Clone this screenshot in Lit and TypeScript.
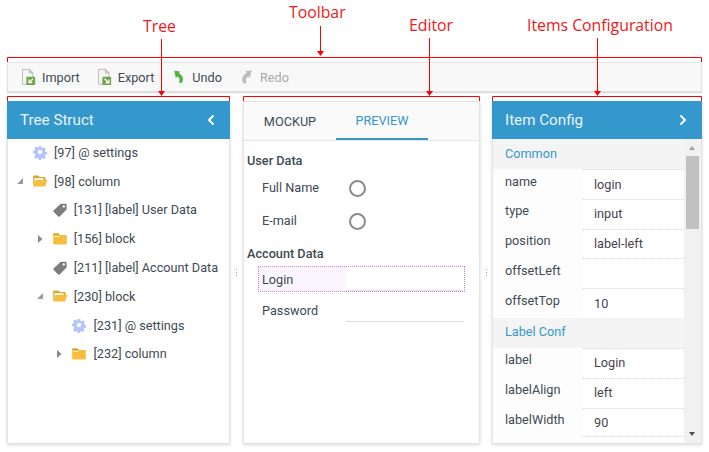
import { LitElement, html, css, svg } from 'lit';
import { customElement } from 'lit/decorators.js';

type TreeIcon = 'gear' | 'open' | 'folder' | 'tag';
interface TreeRow { depth: number; icon: TreeIcon; text: string; arrow?: 'open' | 'closed'; }

const TREE: TreeRow[] = [
  { depth: 0, icon: 'gear', text: '[97] @ settings' },
  { depth: 0, icon: 'open', text: '[98] column', arrow: 'open' },
  { depth: 1, icon: 'tag', text: '[131] [label] User Data' },
  { depth: 1, icon: 'folder', text: '[156] block', arrow: 'closed' },
  { depth: 1, icon: 'tag', text: '[211] [label] Account Data' },
  { depth: 1, icon: 'open', text: '[230] block', arrow: 'open' },
  { depth: 2, icon: 'gear', text: '[231] @ settings' },
  { depth: 2, icon: 'folder', text: '[232] column', arrow: 'closed' },
];

const CONFIG: { section: string; rows: [string, string][] }[] = [
  {
    section: 'Common',
    rows: [['name', 'login'], ['type', 'input'], ['position', 'label-left'], ['offsetLeft', ''], ['offsetTop', '10']],
  },
  {
    section: 'Label Conf',
    rows: [['label', 'Login'], ['labelAlign', 'left'], ['labelWidth', '90']],
  },
];

const gear = html`<svg width="16" height="16" viewBox="0 0 16 16">
  <path fill="#b3c6fb" fill-rule="evenodd" d="M6.600 1h2.800l.4 2 1.300.6 1.800-1.100 1.900 2-1.100 1.700.5 1.300 2 .5v2.800l-2 .4-.5 1.300 1.100 1.800-2 1.900-1.700-1.100-1.300.5-.5 2H6.600l-.4-2-1.300-.5-1.800 1.100-1.900-2L2.300 11l-.5-1.300-2-.4V6.600l2-.5.5-1.300L1.200 3l2-1.400 1.700 1.100L6.200 3zM8 5.400a2.600 2.600 0 1 0 0 5.200 2.600 2.600 0 0 0 0-5.200z" transform="translate(1.200 1.200) scale(.85)"/>
</svg>`;

const folder = html`<svg width="16" height="16" viewBox="0 0 16 16">
  <path fill="#f6be3c" d="M2 2.500h4.500l1.300 1.500H14a.8.8 0 0 1 .8.800v8a.8.800 0 0 1-.8.800H2a.8.800 0 0 1-.8-.8V3.300A.8.800 0 0 1 2 2.500z"/>
  <path fill="#fff3c9" d="M2.500 5h5v1h-5z"/>
  <path fill="#d9a02c" d="M2 2.500h4.500l1.300 1.500H1.200v-.7A.8.8 0 0 1 2 2.500z"/>
</svg>`;

const folderOpen = html`<svg width="16" height="16" viewBox="0 0 16 16">
  <path fill="#dfa42f" d="M1.200 3.200A.8.800 0 0 1 2 2.400h4.300l1.300 1.500h5.200a.8.800 0 0 1 .8.800V7H3.500l-2.300 6z"/>
  <path fill="#fdf6df" d="M2.500 5h9v2h-8l-1 2.500z"/>
  <path fill="#f6be3c" d="M3.600 7H15.400l-2.300 6.500H1.200z"/>
</svg>`;

const tag = html`<svg width="16" height="16" viewBox="0 0 16 16">
  <path fill="#7d7d7d" fill-rule="evenodd" d="M8.800 1.800h5a.8.800 0 0 1 .8.800v5L7.600 14.500a1 1 0 0 1-1.400 0l-4.700-4.700a1 1 0 0 1 0-1.400zM11.800 3.200a1.200 1.200 0 1 0 0 2.400 1.200 1.200 0 0 0 0-2.400z"/>
</svg>`;

const TREE_ICONS: Record<TreeIcon, unknown> = { gear, open: folderOpen, folder, tag };

function docIcon(arrow: unknown) {
  return html`<svg width="14" height="17.500" viewBox="0 0 16 20">
    <path fill="#f4f4f4" stroke="#b4b4b4" d="M.5 1.500h8l4 4v13h-12z"/>
    <path fill="#d8d8d8" stroke="#b4b4b4" d="M8.500 1.500v4h4z"/>
    <rect x="5" y="10" width="10" height="9.500" rx="1" fill="#6fa544"/>
    ${arrow}
  </svg>`;
}

const importIcon = docIcon(svg`<path fill="none" stroke="#fff" stroke-width="1.500" d="M12.500 12.300l-4 4.200M8 13v3.800h3.800"/>`);
const exportIcon = docIcon(svg`<path fill="none" stroke="#fff" stroke-width="1.500" d="M7.500 12.300l4.500 4.500M12.500 13v4h-4"/>`);

const undoIcon = html`<svg width="10" height="14" viewBox="0 0 14 18">
  <path fill="#53b244" stroke="#53b244" stroke-width="1.200" d="M1 1l6.500.8-1.500 2c3.500 1.500 6 4.500 6 8 0 2-.5 3.500-1.700 5.200l-2.800-.6c.8-1.500 1-2.800.7-4.200-.4-2-1.500-3.200-3.800-4.500L3 9.500z"/>
</svg>`;

const redoIcon = html`<svg width="11" height="14" viewBox="0 0 14 18">
  <path fill="#bdbdbd" stroke="#bdbdbd" stroke-width="1.200" d="M13 1l-6.500.8 1.500 2c-3.500 1.500-6 4.500-6 8 0 2 .5 3.500 1.700 5.200l2.800-.6c-.8-1.500-1-2.800-.7-4.200.4-2 1.500-3.200 3.800-4.500L11 9.500z"/>
</svg>`;

@customElement('app-root')
export class AppRoot extends LitElement {
  static styles = css`
    :host {
      display: block;
      position: relative;
      width: 709px;
      height: 452px;
      background: #fff;
      overflow: hidden;
      font-family: Roboto, sans-serif;
      font-size: 12.7px;
      color: #404a54;
    }
    .page {
      display: flex;
      flex-direction: column;
      gap: 9px;
      padding: 62px 7px 0;
    }
    .toolbar {
      display: flex;
      align-items: center;
      height: 30px;
      box-sizing: border-box;
      padding-left: 14px;
      background: #f8f8f8;
      border: 1px solid #e2e2e2;
      box-shadow: 0 1px 1px #dcdcdc;
    }
    .tool {
      display: flex;
      align-items: center;
      gap: 6px;
      margin-right: 18px;
    }
    .tool.history { gap: 8px; margin-right: 19px; }
    .tool.disabled { color: #a8a8a8; }
    .tool.export { margin-right: 20px; }
    .panels { display: flex; height: 343px; }
    .resizer {
      display: flex;
      align-items: center;
      justify-content: center;
      padding-top: 2px;
      width: 13px;
    }
    .resizer.narrow { width: 12px; }
    .resizer i {
      width: 1px;
      height: 9px;
      background: repeating-linear-gradient(#aaa 0 1px, transparent 1px 3px);
    }
    .panel {
      display: flex;
      flex-direction: column;
      box-sizing: border-box;
      background: #fff;
      border: 1px solid #e4e4e4;
      border-top: 0;
      box-shadow: 0 1px 3px rgba(0, 0, 0, .16);
    }
    .tree-panel { width: 223px; }
    .editor-panel { width: 237px; border-top: 1px solid #e4e4e4; }
    .config-panel { width: 210px; }
    .head {
      display: flex;
      align-items: center;
      justify-content: space-between;
      height: 38px;
      flex: none;
      margin: 0 -1px;
      padding: 0 15px 1px 13px;
      box-sizing: border-box;
      background: #3498cc;
      color: #e8f3f9;
      font-size: 15.2px;
    }
    .tree { margin-top: -1px; }
    .tree-row {
      display: flex;
      align-items: center;
      height: 28.8px;
    }
    .arrow { width: 10px; height: 10px; flex: none; margin-right: 7px; }
    .arrow-gap { width: 17px; flex: none; }
    .node-icon { width: 16px; height: 16px; flex: none; margin-right: 6px; }
    .tabs {
      display: flex;
      height: 38px;
      flex: none;
      background: #fafafa;
      border-bottom: 1px solid #e4e4e4;
    }
    .tab {
      display: flex;
      align-items: center;
      justify-content: center;
      width: 92px;
      height: 38px;
      box-sizing: border-box;
    }
    .tab.active {
      color: #3498cc;
      border-bottom: 2px solid #3498cc;
    }
    .form { padding: 0 3px; }
    .form h4 {
      margin: 0;
      font-size: 12.7px;
      font-weight: 500;
      height: 19px;
      line-height: 19px;
    }
    .form h4.first { margin: 10px 0 1px; }
    .form h4.second { margin-top: 7px; }
    .radio-row {
      display: flex;
      align-items: center;
      height: 33px;
      padding-left: 15px;
    }
    .radio-row span { width: 87px; }
    .radio {
      width: 13px;
      height: 13px;
      border: 2px solid #8a8a8a;
      border-radius: 50%;
      position: relative;
      top: 1px;
    }
    .field {
      display: flex;
      margin-left: 11px;
      width: 207px;
      box-sizing: border-box;
    }
    .field span {
      display: flex;
      align-items: center;
      width: 88px;
      padding-left: 4px;
      box-sizing: border-box;
    }
    .field b {
      display: block;
      width: 117px;
      box-sizing: border-box;
      border-bottom: 1px solid #ddd;
    }
    .field.selected {
      height: 26px;
      margin-top: 3px;
      outline: 1px dotted #c57fe8;
      outline-offset: -1px;
    }
    .field.selected span { background: #fbf5fe; }
    .field.selected b { height: 25px; }
    .field.plain { margin-top: 5px; height: 25px; }
    .field.plain span { padding-top: 1px; }
    .config { flex: 1; display: flex; min-height: 0; overflow: hidden; }
    .props { flex: 1; min-width: 0; }
    .section {
      display: flex;
      align-items: center;
      height: 30px;
      box-sizing: border-box;
      padding: 0 0 2px 12px;
      background: #f4f4f4;
      color: #3498cc;
    }
    .prop {
      display: grid;
      grid-template-columns: 90px 1fr;
      height: 29.8px;
    }
    .prop-name { padding: 4.5px 0 0 12px; background: #fdfdfd; }
    .prop-value {
      padding: 6.5px 0 0 11px;
      box-sizing: border-box;
      border-top: 1px dotted #d4d4d4;
      color: #4a3f50;
    }
    .prop:last-child .prop-value { border-bottom: 1px dotted #d4d4d4; }
    .scrollbar {
      position: relative;
      flex: none;
      width: 17px;
      background: #f1f1f1;
    }
    .thumb {
      position: absolute;
      left: 2px;
      top: 17px;
      width: 13px;
      height: 73px;
      background: #c1c1c1;
    }
    .scroll-arrow {
      position: absolute;
      left: 5px;
      width: 0;
      height: 0;
      border-left: 3.5px solid transparent;
      border-right: 3.5px solid transparent;
    }
    .scroll-arrow.up { top: 7px; border-bottom: 4px solid #a3a3a3; }
    .scroll-arrow.down { bottom: 7px; border-top: 4px solid #505050; }
    .notes { position: absolute; inset: 0; pointer-events: none; }
    .notes svg { position: absolute; left: 0; top: 0; }
    .note {
      position: absolute;
      color: #f01818;
      font-family: "Open Sans", sans-serif;
      font-size: 15.8px;
      line-height: 20px;
      white-space: nowrap;
    }
    .note-toolbar { left: 289px; top: 2px; }
    .note-tree { left: 143px; top: 16px; }
    .note-editor { left: 409px; top: 15px; }
    .note-items { left: 527px; top: 15px; }
  `;

  private renderTreeRow(row: TreeRow) {
    const left = 7 + row.depth * 19.7;
    return html`<div class="tree-row" style="padding-left:${left}px">
      ${row.arrow === 'open'
        ? html`<svg class="arrow" viewBox="0 0 10 10"><path fill="#9a9a9a" d="M8 2v6H2z"/></svg>`
        : row.arrow === 'closed'
          ? html`<svg class="arrow" viewBox="0 0 10 10"><path fill="#8a8a8a" d="M3 1l4.500 4L3 9z"/></svg>`
          : html`<span class="arrow-gap"></span>`}
      <span class="node-icon">${TREE_ICONS[row.icon]}</span>
      <span>${row.text}</span>
    </div>`;
  }

  private renderNotes() {
    const red = '#f00';
    return html`<div class="notes">
      <svg width="709" height="452">
        <g fill="none" stroke=${red}>
          <path d="M7.500 62V57.500H701.500V62"/>
          <path d="M7.500 101V96.500H229.500V101"/>
          <path d="M243.500 101V96.500H479.500V101"/>
          <path d="M492.500 101V96.500H701.500V101"/>
          <path d="M320.500 26V52"/>
          <path d="M161.500 39V91"/>
          <path d="M429.500 38V91"/>
          <path d="M597.500 38V91"/>
        </g>
        <g fill=${red}>
          <path d="M317 51h7l-3.500 5z"/>
          <path d="M158 91h7l-3.500 5z"/>
          <path d="M426 91h7l-3.500 5z"/>
          <path d="M594 91h7l-3.500 5z"/>
        </g>
      </svg>
      <span class="note note-toolbar">Toolbar</span>
      <span class="note note-tree">Tree</span>
      <span class="note note-editor">Editor</span>
      <span class="note note-items">Items Configuration</span>
    </div>`;
  }

  render() {
    return html`
      <div class="page">
        <div class="toolbar">
          <div class="tool">${importIcon}<span>Import</span></div>
          <div class="tool export">${exportIcon}<span>Export</span></div>
          <div class="tool history">${undoIcon}<span>Undo</span></div>
          <div class="tool history disabled">${redoIcon}<span>Redo</span></div>
        </div>
        <div class="panels">
          <section class="panel tree-panel">
            <div class="head"><span>Tree Struct</span>
              <svg width="8" height="12" viewBox="0 0 8 12"><path fill="none" stroke="#fff" stroke-width="2" d="M6.500 1.500L2 6l4.500 4.500"/></svg>
            </div>
            <div class="tree">${TREE.map((row) => this.renderTreeRow(row))}</div>
          </section>
          <div class="resizer"><i></i></div>
          <section class="panel editor-panel">
            <div class="tabs">
              <div class="tab">MOCKUP</div>
              <div class="tab active">PREVIEW</div>
            </div>
            <div class="form">
              <h4 class="first">User Data</h4>
              <div class="radio-row"><span>Full Name</span><div class="radio"></div></div>
              <div class="radio-row"><span>E-mail</span><div class="radio"></div></div>
              <h4 class="second">Account Data</h4>
              <div class="field selected"><span>Login</span><b></b></div>
              <div class="field plain"><span>Password</span><b></b></div>
            </div>
          </section>
          <div class="resizer narrow"><i></i></div>
          <section class="panel config-panel">
            <div class="head"><span>Item Config</span>
              <svg width="8" height="12" viewBox="0 0 8 12"><path fill="none" stroke="#fff" stroke-width="2" d="M1.500 1.500L6 6l-4.500 4.500"/></svg>
            </div>
            <div class="config">
              <div class="props">
                ${CONFIG.map((group) => html`
                  <div class="section">${group.section}</div>
                  ${group.rows.map(([name, value]) => html`
                    <div class="prop"><div class="prop-name">${name}</div><div class="prop-value">${value}</div></div>
                  `)}
                `)}
              </div>
              <div class="scrollbar">
                <div class="scroll-arrow up"></div>
                <div class="thumb"></div>
                <div class="scroll-arrow down"></div>
              </div>
            </div>
          </section>
        </div>
      </div>
      ${this.renderNotes()}
    `;
  }
}
